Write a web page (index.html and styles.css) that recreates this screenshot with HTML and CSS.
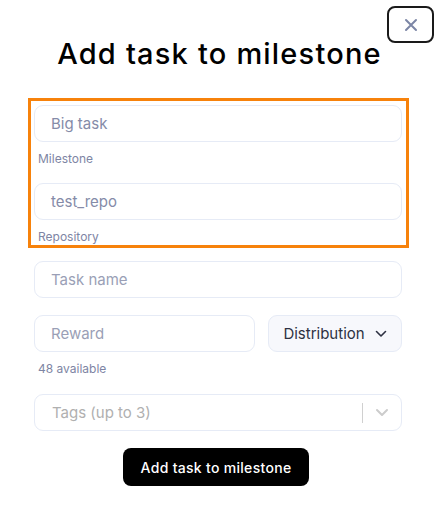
FILE: index.html
```html
<!DOCTYPE html>
<html>
<head>
<meta charset="utf-8">
<link rel="stylesheet" href="styles.css">
</head>
<body>
<div class="modal">
  <button class="close" aria-label="Close">
    <svg width="14" height="14" viewBox="0 0 14 14"><path d="M2 2L12 12M12 2L2 12" stroke="#7c86a6" stroke-width="2" stroke-linecap="round"/></svg>
  </button>
  <h1 class="title">Add task to milestone</h1>
  <div class="highlight">
    <div class="field">
      <div class="input"><span class="value">Big task</span></div>
      <div class="label">Milestone</div>
    </div>
    <div class="field">
      <div class="input"><span class="value">test_repo</span></div>
      <div class="label">Repository</div>
    </div>
  </div>
  <div class="form">
    <div class="input"><span class="placeholder">Task name</span></div>
    <div class="row">
      <div class="input grow"><span class="placeholder">Reward</span></div>
      <div class="select">
        <span>Distribution</span>
        <svg width="12" height="8" viewBox="0 0 12 8"><path d="M1.5 1.5L6 6L10.5 1.5" fill="none" stroke="#2d3142" stroke-width="1.6" stroke-linecap="round" stroke-linejoin="round"/></svg>
      </div>
    </div>
    <div class="label avail">48 available</div>
    <div class="input tags">
      <span class="tag-ph">Tags (up to 3)</span>
      <span class="sep"></span>
      <svg class="chev" width="14" height="9" viewBox="0 0 14 9"><path d="M2 2L7 7L12 2" fill="none" stroke="#cccccc" stroke-width="2" stroke-linecap="round" stroke-linejoin="round"/></svg>
    </div>
    <div class="actions">
      <button class="submit">Add task to milestone</button>
    </div>
  </div>
</div>
</body>
</html>
```
FILE: styles.css
```css
* { box-sizing: border-box; }
html, body { margin: 0; padding: 0; background: #fff; }
body { font-family: "Inter", "Open Sans", sans-serif; color: #000; }
.modal { position: relative; width: 439px; height: 505px; padding: 0; }
.close {
  position: absolute; left: 387px; top: 6px; width: 47px; height: 37px;
  border: 2px solid #1a1a1a; border-radius: 8px; background: #fff;
  display: flex; align-items: center; justify-content: center; padding: 0;
}
.title {
  margin: 0; padding-top: 34px; height: 98px;
  text-align: center; font-weight: 500; font-size: 29px; line-height: 40px;
  letter-spacing: 1.2px;
}
.highlight {
  margin-left: 28px; width: 381px; height: 150px;
  border: 3px solid #f7820b; padding: 4px 4px 0 3px;
}
.field { display: flex; flex-direction: column; }
.field + .field { margin-top: 16px; }
.input {
  height: 37px; border: 1px solid #e6ebf6; border-radius: 9px; background: #fff;
  display: flex; align-items: center; padding-left: 16px; font-size: 15px;
}
.value { color: #858ba8; }
.placeholder { color: #9a9fb6; }
.label { font-size: 12px; color: #7e85a4; padding-left: 4px; line-height: 16px; margin-top: 9px; }
.form { margin-left: 34px; width: 368px; padding-top: 13px; }
.row { display: flex; gap: 13px; margin-top: 17px; }
.grow { flex: 1; }
.select {
  width: 134px; height: 37px; border: 1px solid #e6ebf6; border-radius: 9px; background: #f7f8fc;
  display: flex; align-items: center; justify-content: center; gap: 10px; font-size: 15px; color: #2d3142;
}
.avail { margin-top: 9px; }
.tags { margin-top: 17px; padding-right: 0; }
.tag-ph { color: #b0b0b0; flex: 1; padding-left: 1px; }
.sep { width: 1px; height: 20px; background: #d0d0d0; }
.chev { margin: 0 12px 0 12px; }
.actions { display: flex; justify-content: center; margin-top: 17px; padding-right: 4px; }
.submit {
  background: #000; color: #fff; border: none; border-radius: 8px;
  width: 186px; height: 38px; font-family: inherit; font-size: 14px; font-weight: 500;
  letter-spacing: 0.3px; padding-bottom: 1px;
}
```
